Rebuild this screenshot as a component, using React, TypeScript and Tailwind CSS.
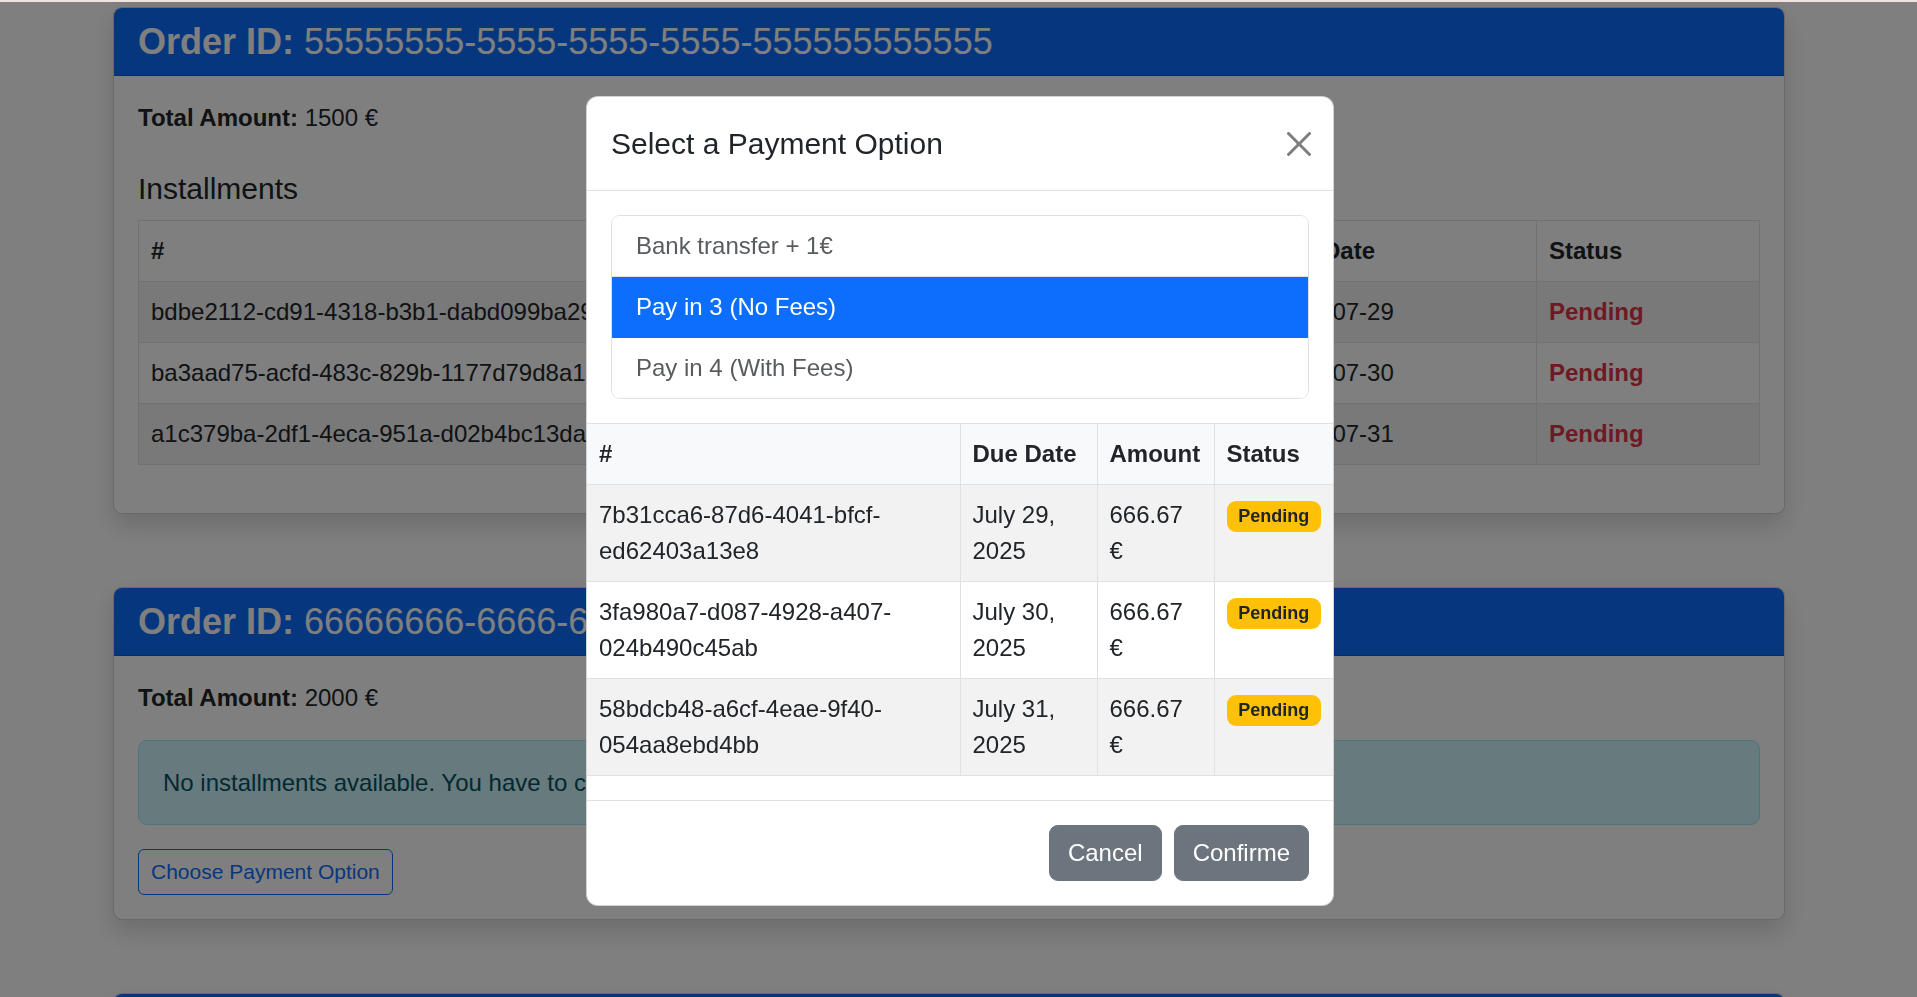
import { useState } from 'react';

interface Installment {
  id: string;
  amount: string;
  dueDate: string;
  status: string;
}

interface OrderCardProps {
  orderId: string;
  total: string;
  installments: Installment[];
}

const orders: OrderCardProps[] = [
  {
    orderId: '55555555-5555-5555-5555-555555555555',
    total: '1500 €',
    installments: [
      { id: 'bdbe2112-cd91-4318-b3b1-dabd099ba29f', amount: '500 €', dueDate: '2025-07-29', status: 'Pending' },
      { id: 'ba3aad75-acfd-483c-829b-1177d79d8a1b', amount: '500 €', dueDate: '2025-07-30', status: 'Pending' },
      { id: 'a1c379ba-2df1-4eca-951a-d02b4bc13da5', amount: '500 €', dueDate: '2025-07-31', status: 'Pending' },
    ],
  },
  {
    orderId: '66666666-6666-6666-6666-666666666666',
    total: '2000 €',
    installments: [],
  },
  {
    orderId: '77777777-7777-7777-7777-777777777777',
    total: '900 €',
    installments: [],
  },
];

const paymentOptions = ['Bank transfer + 1€', 'Pay in 3 (No Fees)', 'Pay in 4 (With Fees)'];

const preview = [
  { id: '7b31cca6-87d6-4041-bfcf-ed62403a13e8', dueDate: 'July 29, 2025', amount: '666.67 €' },
  { id: '3fa980a7-d087-4928-a407-024b490c45ab', dueDate: 'July 30, 2025', amount: '666.67 €' },
  { id: '58bdcb48-a6cf-4eae-9f40-054aa8ebd4bb', dueDate: 'July 31, 2025', amount: '666.67 €' },
];

function OrderCard({ orderId, total, installments }: OrderCardProps) {
  return (
    <section className="mb-[73px] rounded-[9px] border border-[rgba(0,0,0,0.175)] bg-white shadow-[0_12px_24px_rgba(0,0,0,0.15)]">
      <header className="rounded-t-[8px] border-b border-[rgba(0,0,0,0.175)] bg-[#0d6efd] px-[24px] py-[12px]">
        <h4 className="text-[36px] leading-[1.2] text-white">
          <span className="font-bold">Order ID:</span> {orderId}
        </h4>
      </header>
      <div className="p-[24px]">
        {installments.length > 0 ? (
          <>
            <p className="mb-[35px]">
              <span className="font-bold">Total Amount:</span> {total}
            </p>
            <h5 className="mb-[13px] text-[30px] leading-[1.2]">Installments</h5>
            <table className="mb-[24px] w-full table-fixed border-collapse border border-[#dee2e6]">
              <colgroup>
                <col className="w-[743px]" />
                <col className="w-[377px]" />
                <col className="w-[278px]" />
                <col />
              </colgroup>
              <thead>
                <tr>
                  <th className="border border-[#dee2e6] p-[12px] text-left">#</th>
                  <th className="border border-[#dee2e6] p-[12px] text-left">Amount</th>
                  <th className="border border-[#dee2e6] p-[12px] text-left">Due Date</th>
                  <th className="border border-[#dee2e6] p-[12px] text-left">Status</th>
                </tr>
              </thead>
              <tbody>
                {installments.map((item, i) => (
                  <tr key={item.id} className={i % 2 === 0 ? 'bg-[#f2f2f2]' : 'bg-white'}>
                    <td className="border border-[#dee2e6] p-[12px]">{item.id}</td>
                    <td className="border border-[#dee2e6] p-[12px]">{item.amount}</td>
                    <td className="border border-[#dee2e6] p-[12px]">{item.dueDate}</td>
                    <td className="border border-[#dee2e6] p-[12px] font-bold text-[#dc3545]">{item.status}</td>
                  </tr>
                ))}
              </tbody>
            </table>
          </>
        ) : (
          <>
            <p className="mb-[24px]">
              <span className="font-bold">Total Amount:</span> {total}
            </p>
            <div className="mb-[24px] rounded-[9px] border border-[#9eeaf9] bg-[#cff4fc] px-[24px] pt-[24px] pb-[23px] text-[#055160]">
              No installments available. You have to choose a payment option.
            </div>
            <button className="rounded-[6px] border border-[#0d6efd] bg-transparent px-[12px] py-[6px] text-[21px] leading-[1.5] text-[#0d6efd]">
              Choose Payment Option
            </button>
          </>
        )}
      </div>
    </section>
  );
}

function PaymentModal() {
  const [selected, setSelected] = useState(1);

  return (
    <div className="fixed inset-0 z-[55] flex justify-center pt-[96px] pl-[3px]">
      <div className="h-fit w-[748px] overflow-hidden rounded-[12px] border border-[rgba(0,0,0,0.175)] bg-white">
        <div className="flex items-center justify-between border-b border-[#dee2e6] p-[24px]">
          <h5 className="text-[30px] leading-[1.5]">Select a Payment Option</h5>
          <button aria-label="Close" className="mr-[-2px] h-[24px] w-[24px] opacity-50">
            <svg viewBox="0 0 16 16" className="h-[24px] w-[24px]" fill="#000">
              <path d="M.293.293a1 1 0 0 1 1.414 0L8 6.586 14.293.293a1 1 0 1 1 1.414 1.414L9.414 8l6.293 6.293a1 1 0 0 1-1.414 1.414L8 9.414l-6.293 6.293a1 1 0 0 1-1.414-1.414L6.586 8 .293 1.707a1 1 0 0 1 0-1.414z" />
            </svg>
          </button>
        </div>

        <div className="p-[24px]">
          <div className="overflow-hidden rounded-[9px] border border-[#dee2e6]">
            {paymentOptions.map((option, i) => (
              <button
                key={option}
                onClick={() => setSelected(i)}
                className={
                  i === selected
                    ? 'block w-full border-b border-[#0d6efd] bg-[#0d6efd] px-[24px] py-[12px] text-left text-white last:border-b-0'
                    : 'block w-full border-b border-[#dee2e6] bg-white px-[24px] py-[12px] text-left text-[#595c5f] last:border-b-0'
                }
              >
                {option}
              </button>
            ))}
          </div>
        </div>

        <table className="mb-[24px] w-full table-fixed border-collapse">
          <colgroup>
            <col className="w-[373px]" />
            <col className="w-[137px]" />
            <col className="w-[117px]" />
            <col />
          </colgroup>
          <thead className="bg-[#f8f9fa]">
            <tr>
              <th className="border border-l-0 border-[#dee2e6] p-[12px] text-left">#</th>
              <th className="border border-[#dee2e6] p-[12px] text-left">Due Date</th>
              <th className="border border-[#dee2e6] p-[12px] text-left">Amount</th>
              <th className="border border-r-0 border-[#dee2e6] p-[12px] text-left">Status</th>
            </tr>
          </thead>
          <tbody>
            {preview.map((row, i) => (
              <tr key={row.id} className={i % 2 === 0 ? 'bg-[#f2f2f2]' : 'bg-white'}>
                <td className="border border-l-0 border-[#dee2e6] p-[12px] align-top">{row.id}</td>
                <td className="border border-[#dee2e6] p-[12px] align-top">{row.dueDate}</td>
                <td className="border border-[#dee2e6] p-[12px] align-top">
                  <span className="inline-block w-[80px]">{row.amount}</span>
                </td>
                <td className="border border-r-0 border-[#dee2e6] p-[12px] align-top">
                  <div className="pt-[4px]">
                    <span className="block w-fit rounded-[9px] bg-[#ffc107] px-[11.7px] py-[6.3px] text-[18px] leading-none font-bold text-[#212529]">
                      Pending
                    </span>
                  </div>
                </td>
              </tr>
            ))}
          </tbody>
        </table>

        <div className="flex justify-end gap-[12px] border-t border-[#dee2e6] p-[24px]">
          <button className="rounded-[9px] border border-[#6c757d] bg-[#6c757d] px-[18px] py-[9px] text-white">
            Cancel
          </button>
          <button className="rounded-[9px] border border-[#6c757d] bg-[#6c757d] px-[18px] py-[9px] text-white">
            Confirme
          </button>
        </div>
      </div>
    </div>
  );
}

export default function App() {
  return (
    <div className="relative h-[997px] overflow-hidden bg-white font-['Liberation_Sans',Arial,sans-serif] text-[24px] leading-[1.5] text-[#212529]">
      <div className="relative z-[60] h-[2px] bg-[#f3e3de]" />
      <main className="mt-[5px] ml-[113px] w-[1672px]">
        {orders.map((order) => (
          <OrderCard key={order.orderId} {...order} />
        ))}
      </main>
      <div className="fixed inset-0 z-[50] bg-black/50" />
      <PaymentModal />
    </div>
  );
}
